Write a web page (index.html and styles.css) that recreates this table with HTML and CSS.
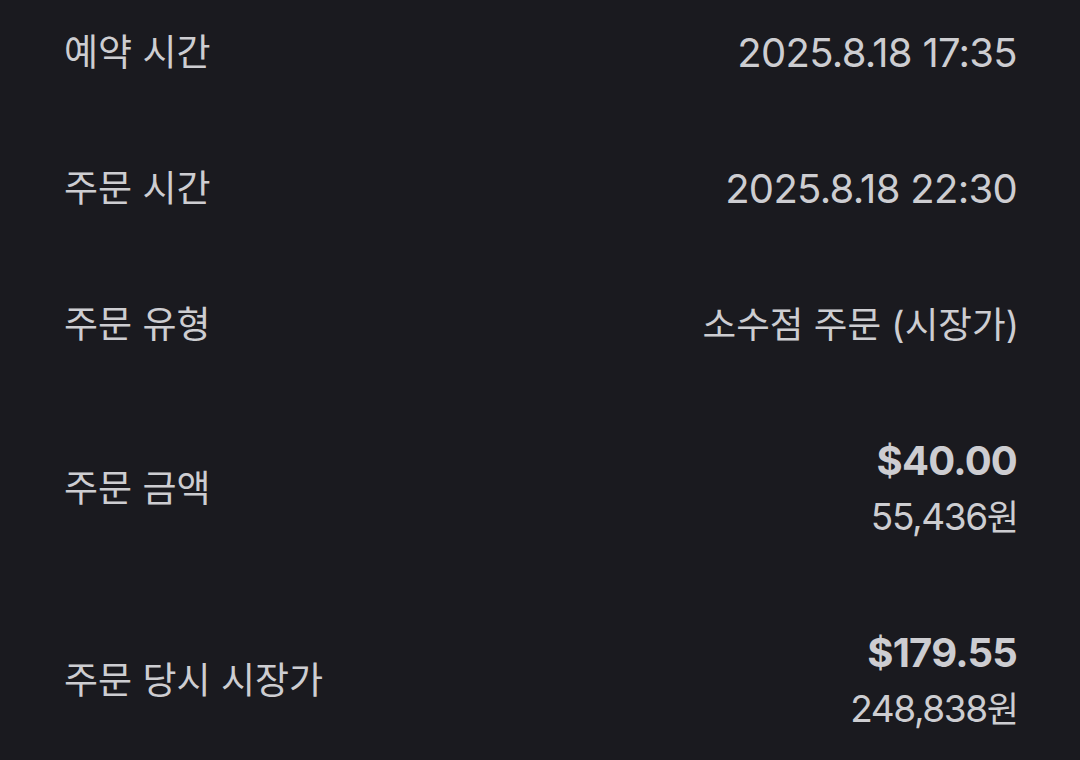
FILE: index.html
```html
<!DOCTYPE html>
<html lang="ko">
<head>
<meta charset="utf-8">
<link rel="stylesheet" href="styles.css">
</head>
<body>
<div class="list">
  <div class="row">
    <div class="label">예약 시간</div>
    <div class="value num">2025.8.18 17:35</div>
  </div>
  <div class="row">
    <div class="label">주문 시간</div>
    <div class="value num">2025.8.18 22:30</div>
  </div>
  <div class="row">
    <div class="label">주문 유형</div>
    <div class="value text">소수점 주문 (시장가)</div>
  </div>
  <div class="row">
    <div class="label">주문 금액</div>
    <div class="value stack">
      <div class="strong">$40.00</div>
      <div class="sub">55,436<span class="unit">원</span></div>
    </div>
  </div>
  <div class="row">
    <div class="label">주문 당시 시장가</div>
    <div class="value stack">
      <div class="strong">$179.55</div>
      <div class="sub">248,838<span class="unit">원</span></div>
    </div>
  </div>
</div>
</body>
</html>
```
FILE: styles.css
```css
html, body {
  margin: 0;
  padding: 0;
  background: #1a1a1f;
  height: 100%;
}
body {
  font-family: "Inter", "Noto Sans CJK KR", sans-serif;
  color: #cdcdd1;
  font-size: 37px;
  overflow: hidden;
}
.list {
  display: flex;
  flex-direction: column;
  gap: 88px;
  padding: 29px 63px 0 64px;
}
.row {
  display: flex;
  justify-content: space-between;
  align-items: center;
}
.label, .value {
  line-height: 48px;
  white-space: nowrap;
}
.num {
  font-size: 40px;
  letter-spacing: -0.7px;
}
.text {
  font-size: 36.6px;
  margin-right: -2px;
}
.stack {
  display: flex;
  flex-direction: column;
  align-items: flex-end;
  gap: 8px;
}
.strong {
  font-size: 40px;
  font-weight: 700;
  letter-spacing: -0.8px;
  line-height: 48px;
}
.sub {
  font-size: 37px;
  letter-spacing: -1.4px;
  line-height: 48px;
  margin-right: -2px;
}
.unit {
  font-size: 35px;
  letter-spacing: 0;
}
```
